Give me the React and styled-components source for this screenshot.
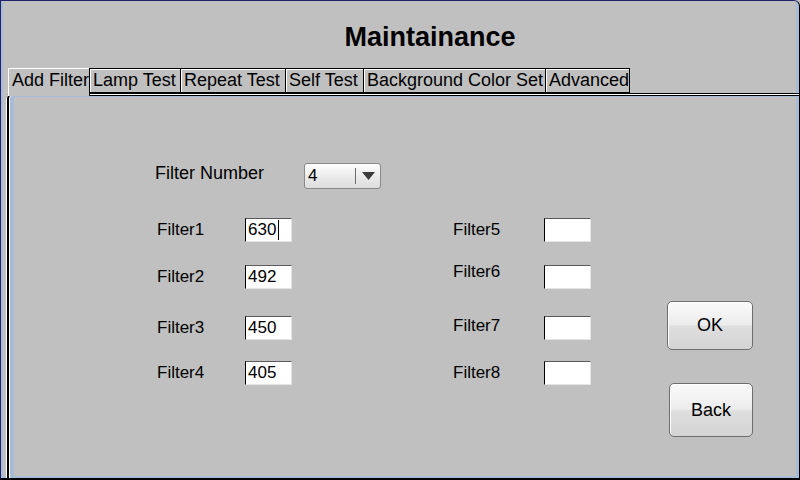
import React from 'react';
import styled, { createGlobalStyle } from 'styled-components';

const frameBlue = '#a8bcd8';
const faceGray = '#c0c0c0';

const GlobalStyle = createGlobalStyle`
  html, body {
    margin: 0;
    padding: 0;
    background: ${faceGray};
  }
  * {
    box-sizing: border-box;
  }
`;

const Window = styled.div`
  width: 800px;
  height: 480px;
  display: flex;
  flex-direction: column;
  background: ${faceGray};
  border-top: 1px solid #22226a;
  border-left: 1px solid #22226a;
  border-right: 1px solid #000;
  border-bottom: 2px solid #000;
  border-top-right-radius: 6px;
  box-shadow: inset 2px 0 0 ${frameBlue}, inset -3px -2px 0 ${frameBlue};
  font-family: 'Liberation Sans', Arial, sans-serif;
  color: #000;
  overflow: hidden;
`;

const Title = styled.h1`
  margin: 0;
  height: 67px;
  padding: 20px 0 0 60px;
  text-align: center;
  font-size: 27px;
  font-weight: bold;
  line-height: 32px;
`;

const TabBar = styled.div`
  display: flex;
  align-items: flex-end;
  height: 25px;
  padding-left: 7px;
  position: relative;
  z-index: 1;
`;

const Tab = styled.div`
  width: ${(p) => p.$w}px;
  height: ${(p) => (p.$active ? '28px' : '25px')};
  margin-bottom: ${(p) => (p.$active ? '-3px' : '0')};
  padding: 0 0 0 3px;
  font-size: 18px;
  line-height: 22px;
  white-space: nowrap;
  overflow: hidden;
  background: ${faceGray};
  border: 1px solid #000;
  border-bottom: ${(p) => (p.$active ? 'none' : '1px solid #000')};
  border-left-color: ${(p) => (p.$active ? '#fff' : '#000')};
  border-top-color: ${(p) => (p.$active ? '#fff' : '#000')};
  box-shadow: ${(p) => (p.$active ? 'none' : 'inset 1px 1px 0 #fff')};
  margin-left: ${(p) => (p.$active ? '0' : '-1px')};
`;

const Panel = styled.div`
  flex: 1;
  margin-left: 5px;
  border-top-left-radius: 6px;
  box-shadow: inset 1px 0 0 #fff, inset 3px 0 0 #000, inset 4px 0 0 #fff,
    inset 8px 0 0 ${frameBlue}, inset 0 1px 0 #000, inset 0 2px 0 #fff,
    inset 0 3px 0 #000, inset 0 4px 0 ${frameBlue};
  display: flex;
  padding: 70px 0 0 149px;
`;

const Form = styled.div`
  display: flex;
  flex-direction: column;
`;

const NumberRow = styled.div`
  display: flex;
  align-items: flex-start;
  height: 26px;
`;

const NumberLabel = styled.span`
  width: 149px;
  font-size: 18px;
  line-height: 20px;
`;

const Select = styled.div`
  width: 77px;
  height: 26px;
  display: flex;
  align-items: center;
  border: 1px solid #8a8a8a;
  border-radius: 3px;
  background: linear-gradient(#fdfdfd, #ececec 50%, #dcdcdc);
  font-size: 17px;
`;

const SelectValue = styled.span`
  flex: 1;
  padding-left: 3px;
  line-height: 20px;
`;

const SelectArrow = styled.span`
  width: 25px;
  height: 16px;
  border-left: 1px solid #6c6c6c;
  display: flex;
  align-items: center;
  justify-content: center;
`;

const FilterGrid = styled.div`
  display: grid;
  grid-template-columns: 88px 47px 161px 91px 47px;
  grid-template-rows: 47px 51px 45px 24px;
  align-items: start;
  margin: 29px 0 0 2px;
`;

const FilterLabel = styled.span`
  font-size: 17px;
  line-height: 24px;
  transform: translateY(${(p) => p.$shift || 0}px);
`;

const Field = styled.div`
  width: 47px;
  height: 24px;
  display: flex;
  align-items: center;
  padding-left: 2px;
  background: #fff;
  border: 1px solid;
  border-color: #5a5a5a #e4e4e4 #e4e4e4 #000;
  font-size: 17px;
  line-height: 20px;
`;

const Caret = styled.span`
  width: 1px;
  height: 20px;
  margin-left: 2px;
  background: #000;
`;

const ButtonColumn = styled.div`
  display: flex;
  flex-direction: column;
  align-items: flex-end;
  gap: 33px;
  padding-top: 138px;
  margin-left: 76px;
  width: 86px;
`;

const Button = styled.button`
  width: ${(p) => p.$w}px;
  height: ${(p) => p.$h}px;
  border: 1px solid #6e6e6e;
  border-radius: 5px;
  background: linear-gradient(#fafafa, #ececec 48%, #dedede 52%, #d4d4d4);
  box-shadow: inset 1px 1px 0 #fff;
  font-family: 'Liberation Sans', Arial, sans-serif;
  font-size: 18px;
  color: #000;
  padding: 0;
`;

const tabs = [
  { label: 'Add Filter', w: 82 },
  { label: 'Lamp Test', w: 92 },
  { label: 'Repeat Test', w: 106 },
  { label: 'Self Test', w: 79 },
  { label: 'Background Color Set', w: 183 },
  { label: 'Advanced', w: 85 },
];

const filters = [
  { left: 'Filter1', value: '630', caret: true, right: 'Filter5' },
  { left: 'Filter2', value: '492', right: 'Filter6', shift: -5 },
  { left: 'Filter3', value: '450', right: 'Filter7', shift: -2 },
  { left: 'Filter4', value: '405', right: 'Filter8' },
];

export default function App() {
  return (
    <>
      <GlobalStyle />
      <Window>
        <Title>Maintainance</Title>
        <TabBar>
          {tabs.map((t, i) => (
            <Tab key={t.label} $active={i === 0} $w={t.w}>{t.label}</Tab>
          ))}
        </TabBar>
        <Panel>
          <Form>
            <NumberRow>
              <NumberLabel>Filter Number</NumberLabel>
              <Select>
                <SelectValue>4</SelectValue>
                <SelectArrow>
                  <svg width="13" height="8" viewBox="0 0 13 8">
                    <path d="M0 0 H13 L6.5 8 Z" fill="#3c3c3c" />
                  </svg>
                </SelectArrow>
              </Select>
            </NumberRow>
            <FilterGrid>
              {filters.map((f) => (
                <React.Fragment key={f.left}>
                  <FilterLabel>{f.left}</FilterLabel>
                  <Field>
                    {f.value}
                    {f.caret && <Caret />}
                  </Field>
                  <span />
                  <FilterLabel $shift={f.shift}>{f.right}</FilterLabel>
                  <Field />
                </React.Fragment>
              ))}
            </FilterGrid>
          </Form>
          <ButtonColumn>
            <Button $w={86} $h={49}>OK</Button>
            <Button $w={84} $h={54}>Back</Button>
          </ButtonColumn>
        </Panel>
      </Window>
    </>
  );
}
